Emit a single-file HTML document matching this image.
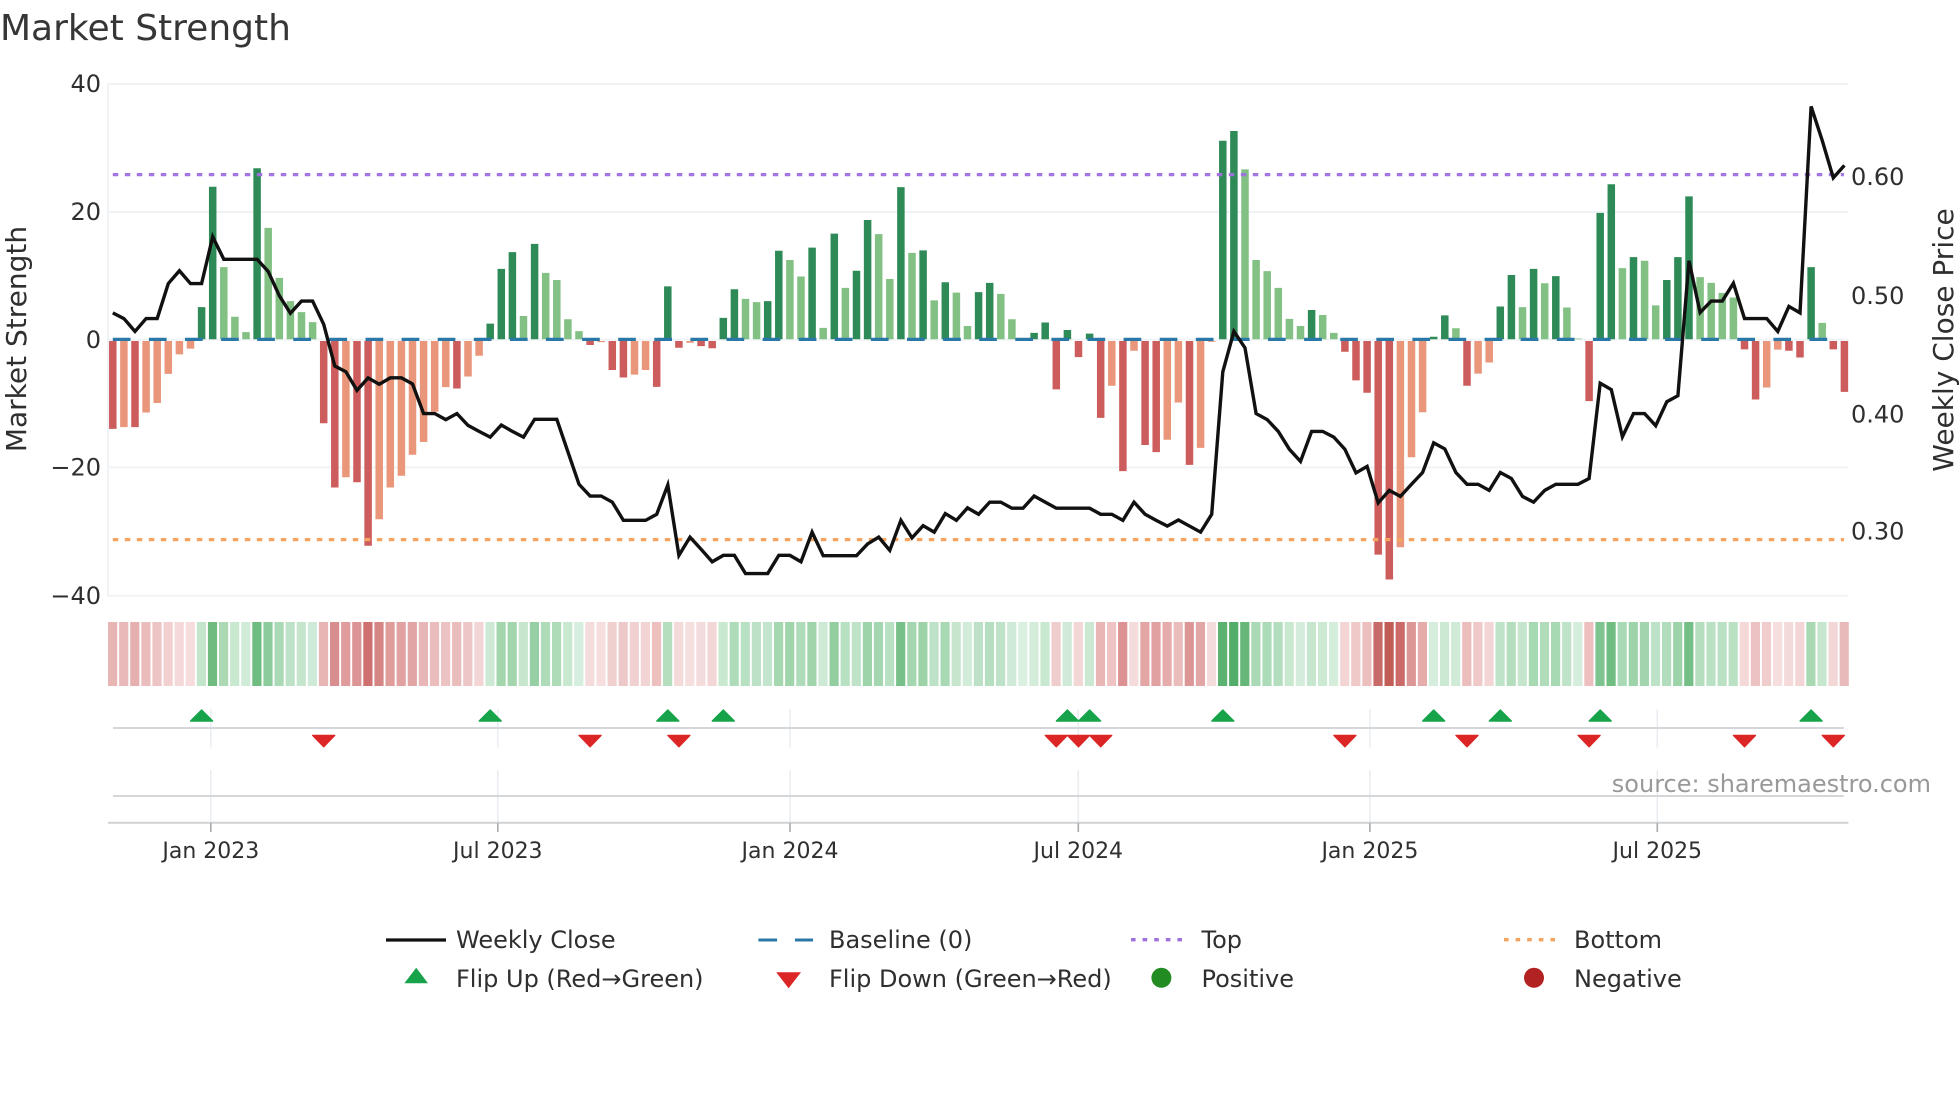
<!DOCTYPE html>
<html lang="en">
<head>
<meta charset="utf-8">
<title>Market Strength</title>
<style>
html,body{margin:0;padding:0;background:#fff;width:1960px;height:1102px;overflow:hidden}
svg{display:block}
text{font-family:"DejaVu Sans","Liberation Sans",sans-serif;fill:#2f2f2f}
.ns path,.ns polyline{vector-effect:non-scaling-stroke;fill:none}
</style>
</head>
<body>
<svg width="1960" height="1102" viewBox="0 0 1960 1102" xmlns="http://www.w3.org/2000/svg">
<rect width="1960" height="1102" fill="#fff"/>
<text x="0" y="40" font-size="36" style="fill:#363636">Market Strength</text>

<!-- grid -->
<path d="M108 84H1848.4M108 212H1848.4M108 339.6H1848.4M108 467.4H1848.4M108 595.7H1848.4M108 83V597" stroke="#f0f3f6" stroke-width="2" fill="none"/>

<!-- bars -->
<g class="ns" transform="translate(112.8,339.3) scale(11.1,.8486)" stroke-width="7.5">
<path stroke="#cd5c5c" d="M0 2V105.6M2 2V103.5M19 2V98.9M20 2V174.7M22 2V168.4M23 2V243.3M31 2V58M43 2V6.7M45 2V36.2M46 2V45M49 2V56M51 2V10M53 2V8M54 2V10.5M85 2V59M87 2V21M89 2V92.6M91 2V155.3M93 2V124.6M94 2V133M97 2V148M111 2V14.7M112 2V48.4M113 2V63M114 2V253.8M115 2V283M122 2V54.7M133 2V72.8M147 2V11.8M148 2V71M151 2V13.5M152 2V21.5M155 2V11.8M156 2V61.9"/>
<path stroke="#e9967a" d="M1 2V103.5M3 2V86.3M4 2V75M5 2V40.8M6 2V17.7M7 2V11M21 2V162.5M24 2V212M25 2V174.7M26 2V160.8M27 2V136M28 2V121M29 2V85.4M30 2V56.4M32 2V43.8M33 2V19.4M44 2V3.4M47 2V41.7M48 2V36.2M52 2V4M90 2V54.7M92 2V13.5M95 2V118.3M96 2V74.5M98 2V128M99 2V3M116 2V245M117 2V139M118 2V85.9M123 2V40.4M124 2V27.4M149 2V56.8M150 2V12.2"/>
<path stroke="#2e8b57" d="M8 0V-37.9M9 0V-179.7M13 0V-201.6M34 0V-18.5M35 0V-83M36 0V-102.7M38 0V-112.4M50 0V-62.3M55 0V-25.2M56 0V-59M59 0V-45M60 0V-104.4M63 0V-108M65 0V-124.6M67 0V-80.8M68 0V-140.6M71 0V-179.3M73 0V-104.8M75 0V-67.3M78 0V-55.6M79 0V-66.5M83 0V-7.6M84 0V-19.8M86 0V-11M88 0V-6.7M100 0V-234M101 0V-245.4M108 0V-34.5M119 0V-3M120 0V-28.2M125 0V-38.7M126 0V-75.8M128 0V-83M130 0V-74.5M134 0V-149M135 0V-182.7M137 0V-96.8M140 0V-69.9M141 0V-96.8M142 0V-168.4M153 0V-85"/>
<path stroke="#82c084" d="M10 0V-85M11 0V-26.5M12 0V-8.4M14 0V-131.3M15 0V-72.4M16 0V-45M17 0V-32M18 0V-20.2M37 0V-27.4M39 0V-78.3M40 0V-69.9M41 0V-23.6M42 0V-9.7M57 0V-47.6M58 0V-43.8M61 0V-93.4M62 0V-74M64 0V-13.5M66 0V-60.6M69 0V-124M70 0V-71M72 0V-101.9M74 0V-45.9M76 0V-55M77 0V-15.6M80 0V-53.5M81 0V-23.6M102 0V-200.3M103 0V-93.4M104 0V-80.4M105 0V-60.6M106 0V-24M107 0V-15.6M109 0V-28.6M110 0V-7.6M121 0V-13M127 0V-37.9M129 0V-66M131 0V-37.5M132 0V-1M136 0V-83.8M138 0V-92.6M139 0V-40M143 0V-73.2M144 0V-66.5M145 0V-54.7M146 0V-49.2M154 0V-19.4"/>
</g>

<!-- reference lines -->
<path d="M112.8 339.4H1844" stroke="#2a78a8" stroke-width="3.2" stroke-dasharray="17.7 18.4" fill="none"/>
<path d="M112.8 174.6H1844" stroke="#9f6fe0" stroke-width="3.3" stroke-dasharray="5.5 6.5" fill="none" opacity=".95"/>
<path d="M112.8 539.6H1844" stroke="#f4a460" stroke-width="3.3" stroke-dasharray="5.5 6.5" fill="none"/>

<!-- weekly close -->
<g class="ns" transform="translate(112.8,60) scale(11.1,.35714)">
<polyline stroke="#111" stroke-width="3.4" stroke-linejoin="miter" points="0,708 1,724 2,760 3,724 4,724 5,626 6,590 7,626 8,626 9,495 10,558 11,558 12,558 13,558 14,592 15,660 16,709 17,675 18,675 19,740 20,857 21,873 22,925 23,890 24,908 25,890 26,890 27,907 28,990 29,990 30,1007 31,990 32,1023 33,1040 34,1056 35,1022 36,1040 37,1056 38,1006 39,1006 40,1006 41,1097 42,1188 43,1221 44,1221 45,1238 46,1289 47,1289 48,1289 49,1272 50,1190 51,1387 52,1336 53,1370 54,1405 55,1387 56,1387 57,1438 58,1438 59,1438 60,1387 61,1387 62,1405 63,1322 64,1388 65,1388 66,1388 67,1388 68,1355 69,1336 70,1373 71,1289 72,1338 73,1304 74,1322 75,1270 76,1289 77,1254 78,1272 79,1238 80,1238 81,1255 82,1255 83,1221 84,1238 85,1255 86,1255 87,1255 88,1255 89,1272 90,1272 91,1289 92,1238 93,1272 94,1289 95,1305 96,1288 97,1305 98,1322 99,1272 100,873 101,760 102,806 103,990 104,1007 105,1040 106,1090 107,1124 108,1040 109,1040 110,1056 111,1090 112,1156 113,1138 114,1240 115,1205 116,1222 117,1188 118,1155 119,1072 120,1089 121,1155 122,1188 123,1188 124,1205 125,1155 126,1172 127,1222 128,1238 129,1205 130,1188 131,1188 132,1188 133,1172 134,905 135,923 136,1055 137,990 138,990 139,1024 140,957 141,940 142,562 143,707 144,675 145,675 146,625 147,724 148,724 149,724 150,760 151,690 152,708 153,130 154,225 155,330 156,295"/>
</g>

<!-- heat strip -->
<g class="ns" transform="translate(112.6,622) scale(11.1,1)" stroke-width="9.2">
<path stroke="#e8b5b5" d="M0 0V64"/><path stroke="#e9b9b9" d="M1 0V64"/><path stroke="#e6b0b0" d="M2 0V64"/><path stroke="#eabcbc" d="M3 0V64"/><path stroke="#edc5c5" d="M4 0V64"/><path stroke="#f2d0d0" d="M5 0V64"/><path stroke="#f5d8d8" d="M6 0V64"/><path stroke="#f6dcdc" d="M7 0V64"/>
<path stroke="#c3e5cc" d="M8 0V64"/><path stroke="#6fbb80" d="M9 0V64"/><path stroke="#aad9b4" d="M10 0V64"/><path stroke="#c8e8d0" d="M11 0V64"/><path stroke="#d0ecd8" d="M12 0V64"/><path stroke="#6ebc7f" d="M13 0V64"/><path stroke="#8ccc9c" d="M14 0V64"/><path stroke="#aadab5" d="M15 0V64"/><path stroke="#bde2c7" d="M16 0V64"/><path stroke="#c5e6cd" d="M17 0V64"/><path stroke="#cfead8" d="M18 0V64"/>
<path stroke="#e9b4b4" d="M19 0V64"/><path stroke="#d88e8e" d="M20 0V64"/><path stroke="#e09c9c" d="M21 0V64"/><path stroke="#dc9494" d="M22 0V64"/><path stroke="#cf7070" d="M23 0V64"/><path stroke="#d68585" d="M24 0V64"/><path stroke="#e09b9b" d="M25 0V64"/><path stroke="#e2a1a1" d="M26 0V64"/><path stroke="#e2a5a5" d="M27 0V64"/><path stroke="#e8b6b6" d="M28 0V64"/><path stroke="#eabcbc" d="M29 0V64"/><path stroke="#ecc2c2" d="M30 0V64"/><path stroke="#eabdbd" d="M31 0V64"/><path stroke="#edc7c7" d="M32 0V64"/><path stroke="#f3d5d5" d="M33 0V64"/>
<path stroke="#cde9d5" d="M34 0V64"/><path stroke="#a3d6ad" d="M35 0V64"/><path stroke="#a3d6ad" d="M36 0V64"/><path stroke="#c6e6ce" d="M37 0V64"/><path stroke="#96cfa3" d="M38 0V64"/><path stroke="#aedcb9" d="M39 0V64"/><path stroke="#aedcb9" d="M40 0V64"/><path stroke="#c8e8d0" d="M41 0V64"/><path stroke="#d6eedd" d="M42 0V64"/>
<path stroke="#f5dcdc" d="M43 0V64"/><path stroke="#f6dede" d="M44 0V64"/><path stroke="#f0cfcf" d="M45 0V64"/><path stroke="#edc8c8" d="M46 0V64"/><path stroke="#f0d0d0" d="M47 0V64"/><path stroke="#f2d4d4" d="M48 0V64"/><path stroke="#eebfbf" d="M49 0V64"/>
<path stroke="#b4debe" d="M50 0V64"/><path stroke="#f5dada" d="M51 0V64"/><path stroke="#f6dfdf" d="M52 0V64"/><path stroke="#f5dcdc" d="M53 0V64"/><path stroke="#f3d6d6" d="M54 0V64"/>
<path stroke="#c9e8d0" d="M55 0V64"/><path stroke="#aedcb9" d="M56 0V64"/><path stroke="#b8e0c2" d="M57 0V64"/><path stroke="#bce1c6" d="M58 0V64"/><path stroke="#c4e5cd" d="M59 0V64"/><path stroke="#a5d7b0" d="M60 0V64"/><path stroke="#a0d5ab" d="M61 0V64"/><path stroke="#aedcb9" d="M62 0V64"/><path stroke="#a0d5ac" d="M63 0V64"/><path stroke="#ceead6" d="M64 0V64"/><path stroke="#92cea0" d="M65 0V64"/><path stroke="#b8e0c2" d="M66 0V64"/><path stroke="#bee3c8" d="M67 0V64"/><path stroke="#9ed4a9" d="M68 0V64"/><path stroke="#a4d6af" d="M69 0V64"/><path stroke="#b8e0c2" d="M70 0V64"/><path stroke="#78c08a" d="M71 0V64"/><path stroke="#a4d6af" d="M72 0V64"/><path stroke="#9dd3a9" d="M73 0V64"/><path stroke="#bde2c7" d="M74 0V64"/><path stroke="#a8d9b3" d="M75 0V64"/><path stroke="#c5e6cd" d="M76 0V64"/><path stroke="#d2ecda" d="M77 0V64"/><path stroke="#bce1c6" d="M78 0V64"/><path stroke="#b5dfc0" d="M79 0V64"/><path stroke="#bde2c7" d="M80 0V64"/><path stroke="#cfebd7" d="M81 0V64"/><path stroke="#daf0e1" d="M82 0V64"/><path stroke="#d3edda" d="M83 0V64"/><path stroke="#c9e8d0" d="M84 0V64"/>
<path stroke="#f0cdcd" d="M85 0V64"/><path stroke="#cfead6" d="M86 0V64"/><path stroke="#f3d6d6" d="M87 0V64"/><path stroke="#cce8d3" d="M88 0V64"/>
<path stroke="#e9b5b5" d="M89 0V64"/><path stroke="#eec3c3" d="M90 0V64"/><path stroke="#dc9292" d="M91 0V64"/><path stroke="#f5dcdc" d="M92 0V64"/><path stroke="#e4a5a5" d="M93 0V64"/><path stroke="#e2a1a1" d="M94 0V64"/><path stroke="#e6acac" d="M95 0V64"/><path stroke="#ebbcbc" d="M96 0V64"/><path stroke="#dc9696" d="M97 0V64"/><path stroke="#e3a6a6" d="M98 0V64"/><path stroke="#f5dcdc" d="M99 0V64"/>
<path stroke="#5cb270" d="M100 0V64"/><path stroke="#52ad68" d="M101 0V64"/><path stroke="#66b67a" d="M102 0V64"/><path stroke="#aadab5" d="M103 0V64"/><path stroke="#acdbb7" d="M104 0V64"/><path stroke="#b2debd" d="M105 0V64"/><path stroke="#c9e8d0" d="M106 0V64"/><path stroke="#d3edda" d="M107 0V64"/><path stroke="#c6e6ce" d="M108 0V64"/><path stroke="#cbe9d3" d="M109 0V64"/><path stroke="#d5eedc" d="M110 0V64"/>
<path stroke="#f3d5d5" d="M111 0V64"/><path stroke="#efc8c8" d="M112 0V64"/><path stroke="#ecbfbf" d="M113 0V64"/><path stroke="#c96a6a" d="M114 0V64"/><path stroke="#c25c57" d="M115 0V64"/><path stroke="#cb6a68" d="M116 0V64"/><path stroke="#dc9696" d="M117 0V64"/><path stroke="#e6acac" d="M118 0V64"/>
<path stroke="#d5eddc" d="M119 0V64"/><path stroke="#cbe9d3" d="M120 0V64"/><path stroke="#cfead6" d="M121 0V64"/>
<path stroke="#ecbdbd" d="M122 0V64"/><path stroke="#efc8c8" d="M123 0V64"/><path stroke="#f3d5d5" d="M124 0V64"/>
<path stroke="#bfe3c8" d="M125 0V64"/><path stroke="#b4debe" d="M126 0V64"/><path stroke="#c5e6cd" d="M127 0V64"/><path stroke="#a7d9b3" d="M128 0V64"/><path stroke="#b0dcba" d="M129 0V64"/><path stroke="#a7d9b3" d="M130 0V64"/><path stroke="#bee3c8" d="M131 0V64"/><path stroke="#d5eddc" d="M132 0V64"/>
<path stroke="#edbfbf" d="M133 0V64"/>
<path stroke="#7fc391" d="M134 0V64"/><path stroke="#70bd82" d="M135 0V64"/><path stroke="#aadab5" d="M136 0V64"/><path stroke="#9dd3a9" d="M137 0V64"/><path stroke="#a2d5ad" d="M138 0V64"/><path stroke="#bde2c7" d="M139 0V64"/><path stroke="#b2ddbc" d="M140 0V64"/><path stroke="#9dd3a9" d="M141 0V64"/><path stroke="#74bf85" d="M142 0V64"/><path stroke="#b4debe" d="M143 0V64"/><path stroke="#bbe1c5" d="M144 0V64"/><path stroke="#bbe1c5" d="M145 0V64"/><path stroke="#bbe1c5" d="M146 0V64"/>
<path stroke="#f5d9d9" d="M147 0V64"/><path stroke="#edc2c2" d="M148 0V64"/><path stroke="#f0cdcd" d="M149 0V64"/><path stroke="#f6dede" d="M150 0V64"/><path stroke="#f5dada" d="M151 0V64"/><path stroke="#f3d5d5" d="M152 0V64"/>
<path stroke="#a8d9b3" d="M153 0V64"/><path stroke="#c6e6ce" d="M154 0V64"/><path stroke="#f3d6d6" d="M155 0V64"/><path stroke="#e8baba" d="M156 0V64"/>
</g>

<!-- flip rows -->
<path d="M210.8 709V747.5M210.8 770V823M497.8 709V747.5M497.8 770V823M790 709V747.5M790 770V823M1078.3 709V747.5M1078.3 770V823M1369.9 709V747.5M1369.9 770V823M1657.3 709V747.5M1657.3 770V823" stroke="#e9edf1" stroke-width="1.5" fill="none"/>
<path d="M113 728H1843.8M113 796H1843.8" stroke="#d4d6d9" stroke-width="2" fill="none"/>
<path d="M108 822.7H1848.4" stroke="#cfd1d4" stroke-width="2" fill="none"/>
<path d="M210.8 823V832M497.8 823V832M790 823V832M1078.3 823V832M1369.9 823V832M1657.3 823V832" stroke="#aaa" stroke-width="1.6" fill="none"/>

<path fill="#16a34a" stroke="#16a34a" stroke-width="1.4" stroke-linejoin="round" d="M201.6 710l11 11h-22zM490.2 710l11 11h-22zM667.8 710l11 11h-22zM723.3 710l11 11h-22zM1067.4 710l11 11h-22zM1089.6 710l11 11h-22zM1222.8 710l11 11h-22zM1433.7 710l11 11h-22zM1500.3 710l11 11h-22zM1600.2 710l11 11h-22zM1811.1 710l11 11h-22z"/>
<path fill="#dc2626" stroke="#dc2626" stroke-width="1.4" stroke-linejoin="round" d="M323.7 746.7l-11-11.3h22zM590.1 746.7l-11-11.3h22zM678.9 746.7l-11-11.3h22zM1056.3 746.7l-11-11.3h22zM1078.5 746.7l-11-11.3h22zM1100.7 746.7l-11-11.3h22zM1344.9 746.7l-11-11.3h22zM1467 746.7l-11-11.3h22zM1589.1 746.7l-11-11.3h22zM1744.5 746.7l-11-11.3h22zM1833.3 746.7l-11-11.3h22z"/>

<!-- axis text -->
<g font-size="24" text-anchor="end">
<text x="101" y="92">40</text>
<text x="101" y="220">20</text>
<text x="101" y="348">0</text>
<text x="101" y="475.5">−20</text>
<text x="101" y="604">−40</text>
</g>
<g font-size="24">
<text x="1851" y="185">0.60</text>
<text x="1851" y="304">0.50</text>
<text x="1851" y="422.5">0.40</text>
<text x="1851" y="539.5">0.30</text>
</g>
<text font-size="28" text-anchor="middle" transform="translate(26,339) rotate(-90)">Market Strength</text>
<text font-size="28" text-anchor="middle" transform="translate(1953,340) rotate(-90)">Weekly Close Price</text>
<g font-size="22" text-anchor="middle">
<text x="210.8" y="858">Jan 2023</text>
<text x="497.8" y="858">Jul 2023</text>
<text x="790" y="858">Jan 2024</text>
<text x="1078.3" y="858">Jul 2024</text>
<text x="1369.9" y="858">Jan 2025</text>
<text x="1657.3" y="858">Jul 2025</text>
</g>
<text x="1931" y="792" font-size="24" text-anchor="end" style="fill:#999">source: sharemaestro.com</text>

<!-- legend -->
<path d="M386 940H446" stroke="#111" stroke-width="3.2" fill="none"/>
<path d="M758.4 940H777.1M795 940H813" stroke="#2a78a8" stroke-width="3" fill="none"/>
<path d="M1131 939.7H1186" stroke="#9f6fe0" stroke-width="3.3" stroke-dasharray="4.6 7" fill="none"/>
<path d="M1504 939.7H1558.5" stroke="#f4a460" stroke-width="3.3" stroke-dasharray="4.6 7" fill="none"/>
<path d="M416.2 967.7l11.8 15.6h-23.6z" fill="#16a34a"/>
<path d="M788.6 988.3l-12.4-16h24.8z" fill="#dc2626"/>
<circle cx="1161.4" cy="977.8" r="10" fill="#228b22"/>
<circle cx="1534" cy="977.8" r="10" fill="#b22222"/>
<g font-size="24">
<text x="456" y="948">Weekly Close</text>
<text x="829" y="948">Baseline (0)</text>
<text x="1201.5" y="948">Top</text>
<text x="1574" y="948">Bottom</text>
<text x="456" y="987">Flip Up (Red→Green)</text>
<text x="829" y="987">Flip Down (Green→Red)</text>
<text x="1201.5" y="987">Positive</text>
<text x="1574" y="987">Negative</text>
</g>
</svg>
</body>
</html>
